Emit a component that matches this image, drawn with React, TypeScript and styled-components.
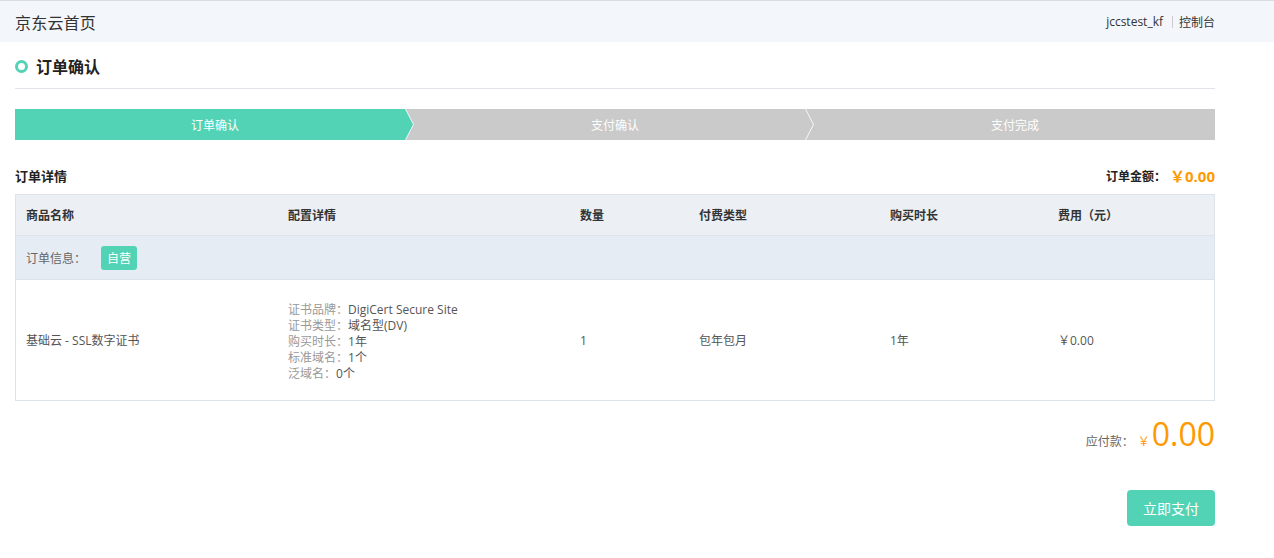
import React from "react";
import styled, { createGlobalStyle } from "styled-components";

const Global = createGlobalStyle`
  html, body { margin: 0; padding: 0; background: #fff; }
  body { font-family: "Open Sans", "Noto Sans CJK SC", sans-serif; color: #333; }
  * { box-sizing: border-box; }
`;

const TEAL = "#52d3b6";
const GRAY = "#cacaca";
const ORANGE = "#ff9900";

const Header = styled.header`
  height: 42px;
  border-top: 1px solid #dadee4;
  background: #f3f6fa;
`;

const Wrap = styled.div`
  width: 1200px;
  margin-left: 15px;
`;

const HeaderInner = styled(Wrap)`
  height: 41px;
  display: flex;
  align-items: center;
  justify-content: space-between;
`;

const Brand = styled.div`
  font-size: 16px;
  color: #333;
  letter-spacing: 0.2px;
`;

const UserBox = styled.div`
  display: flex;
  align-items: center;
  font-size: 12px;
  color: #333;
`;

const Sep = styled.span`
  width: 1px;
  height: 12px;
  background: #ccc;
  margin: 0 6px 0 9px;
`;

const TitleRow = styled.div`
  height: 47px;
  display: flex;
  align-items: center;
  gap: 8px;
  border-bottom: 1px solid #e1e5ea;
  padding-top: 2px;
`;

const Ring = styled.span`
  display: block;
  flex-shrink: 0;
  width: 13px;
  height: 13px;
  border-radius: 50%;
  border: 3px solid ${TEAL};
`;

const Title = styled.h1`
  margin: 0;
  font-size: 16px;
  font-weight: bold;
  color: #222;
`;

const Steps = styled.div`
  margin-top: 20px;
  height: 31px;
  display: flex;
`;

const Step = styled.div<{ $active?: boolean }>`
  position: relative;
  flex: 1;
  display: flex;
  align-items: center;
  justify-content: center;
  background: ${(p) => (p.$active ? TEAL : GRAY)};
  color: #fff;
  font-size: 12px;
`;

const ArrowSvg = styled.svg`
  position: absolute;
  left: -10px;
  top: 0;
`;

const Arrow = ({ prev, next }: { prev: string; next: string }) => (
  <ArrowSvg width="10" height="31" viewBox="0 0 10 31">
    <rect x="0" y="0" width="10" height="31" fill={next} />
    <polygon points="0,0 0.5,0 8.5,15.5 0.5,31 0,31" fill={prev} />
    <polyline points="0.5,0 8.5,15.5 0.5,31" fill="none" stroke="#fff" strokeWidth="1" opacity="0.85" />
  </ArrowSvg>
);

const SectionHead = styled.div`
  margin-top: 27px;
  height: 17px;
  display: flex;
  align-items: center;
  justify-content: space-between;
`;

const SectionTitle = styled.div`
  font-size: 13px;
  font-weight: bold;
  color: #222;
`;

const Amount = styled.div`
  display: flex;
  align-items: center;
  font-size: 12px;
  font-weight: bold;
  color: #222;
`;

const AmountValue = styled.span`
  color: ${ORANGE};
  font-size: 15px;
  font-weight: bold;
  margin-left: 4px;
`;

const Table = styled.div`
  margin-top: 10px;
  border: 1px solid #dce3ea;
`;

const Row = styled.div<{ $bg: string; $h: number }>`
  display: grid;
  grid-template-columns: 262px 292px 119px 191px 168px 1fr;
  align-items: center;
  padding-left: 10px;
  height: ${(p) => p.$h}px;
  background: ${(p) => p.$bg};
`;

const Th = styled.div`
  font-size: 12px;
  font-weight: bold;
  color: #333;
`;

const InfoRow = styled.div`
  display: flex;
  align-items: center;
  height: 45px;
  padding-left: 10px;
  background: #e6ecf4;
  border-top: 1px solid #dce3ea;
  border-bottom: 1px solid #dce3ea;
  font-size: 12px;
  color: #666;
`;

const Badge = styled.span`
  margin-left: 15px;
  width: 36px;
  height: 24px;
  border-radius: 3px;
  background: ${TEAL};
  color: #fff;
  font-size: 12px;
  display: flex;
  align-items: center;
  justify-content: center;
`;

const Td = styled.div`
  font-size: 12px;
  color: #555;
`;

const ConfigList = styled.div`
  display: flex;
  flex-direction: column;
  font-size: 12px;
  line-height: 16px;
  padding-top: 4px;
`;

const ConfigLine = styled.div`
  color: #555;
`;

const ConfigLabel = styled.span`
  color: #999;
`;

const Payable = styled.div`
  margin-top: 15px;
  display: flex;
  justify-content: flex-end;
  align-items: baseline;
  font-size: 12px;
  color: #666;
`;

const Yen = styled.span`
  color: ${ORANGE};
  font-size: 12px;
  margin-left: 4px;
  margin-right: 2px;
`;

const Big = styled.span`
  color: ${ORANGE};
  font-size: 32px;
  line-height: 36px;
`;

const ButtonRow = styled.div`
  margin-top: 38px;
  display: flex;
  justify-content: flex-end;
`;

const PayButton = styled.button`
  width: 88px;
  height: 36px;
  border: none;
  border-radius: 4px;
  background: ${TEAL};
  color: #fff;
  font-family: inherit;
  font-size: 14px;
  cursor: pointer;
`;

const config: [string, string][] = [
  ["证书品牌：", "DigiCert Secure Site"],
  ["证书类型：", "域名型(DV)"],
  ["购买时长：", "1年"],
  ["标准域名：", "1个"],
  ["泛域名：", "0个"],
];

export default function App() {
  return (
    <>
      <Global />
      <Header>
        <HeaderInner>
          <Brand>京东云首页</Brand>
          <UserBox>
            <span>jccstest_kf</span>
            <Sep />
            <span>控制台</span>
          </UserBox>
        </HeaderInner>
      </Header>
      <Wrap>
        <TitleRow>
          <Ring />
          <Title>订单确认</Title>
        </TitleRow>
        <Steps>
          <Step $active>订单确认</Step>
          <Step>
            <Arrow prev={TEAL} next={GRAY} />
            支付确认
          </Step>
          <Step>
            <Arrow prev={GRAY} next={GRAY} />
            支付完成
          </Step>
        </Steps>
        <SectionHead>
          <SectionTitle>订单详情</SectionTitle>
          <Amount>
            订单金额：<AmountValue>￥0.00</AmountValue>
          </Amount>
        </SectionHead>
        <Table>
          <Row $bg="#ecf0f4" $h={40}>
            <Th>商品名称</Th>
            <Th>配置详情</Th>
            <Th>数量</Th>
            <Th>付费类型</Th>
            <Th>购买时长</Th>
            <Th>费用（元）</Th>
          </Row>
          <InfoRow>
            订单信息：<Badge>自营</Badge>
          </InfoRow>
          <Row $bg="#fff" $h={120}>
            <Td>基础云 - SSL数字证书</Td>
            <ConfigList>
              {config.map(([k, v]) => (
                <ConfigLine key={k}>
                  <ConfigLabel>{k}</ConfigLabel>
                  {v}
                </ConfigLine>
              ))}
            </ConfigList>
            <Td>1</Td>
            <Td>包年包月</Td>
            <Td>1年</Td>
            <Td>￥0.00</Td>
          </Row>
        </Table>
        <Payable>
          应付款：<Yen>￥</Yen>
          <Big>0.00</Big>
        </Payable>
        <ButtonRow>
          <PayButton>立即支付</PayButton>
        </ButtonRow>
      </Wrap>
    </>
  );
}
